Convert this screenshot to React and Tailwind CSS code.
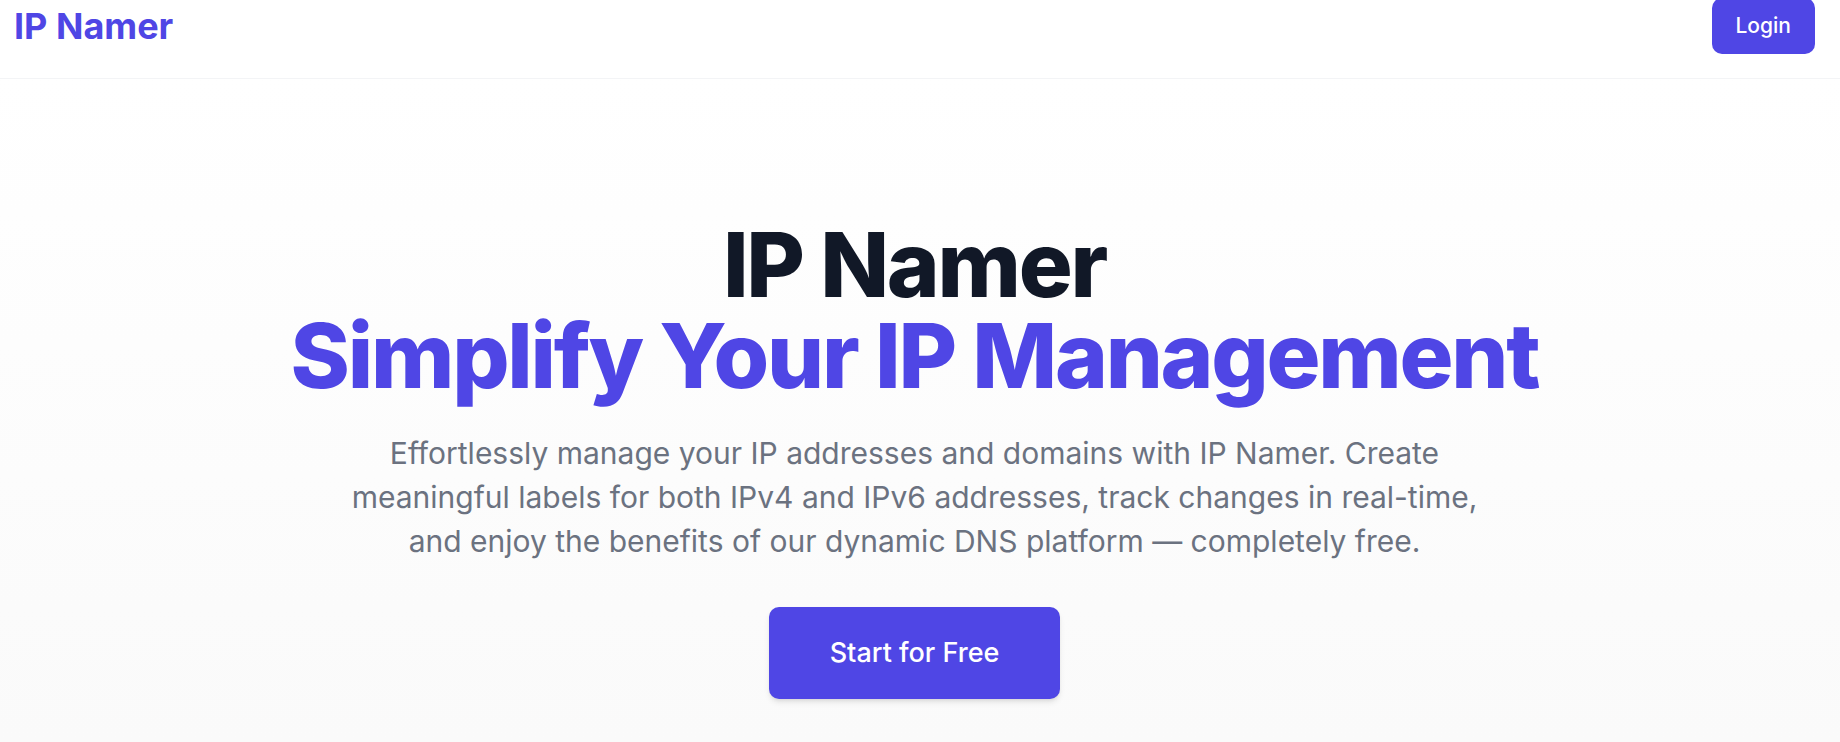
export default function App() {
  return (
    <div className="min-h-screen bg-white font-['Inter',sans-serif]">
      {/* Header */}
      <header className="border-b border-gray-100 shadow-[0_1px_2px_rgba(0,0,0,0.03)]">
        <div className="-mt-[2px] flex items-center justify-between pb-[24px] pl-[14px] pr-[25px]">
          <a href="#" className="text-[36px] font-bold leading-[56px] text-[#4f46e5]">
            IP Namer
          </a>
          <button className="h-[56px] rounded-[10px] bg-[#4f46e5] px-[24px] text-[21px] font-medium text-white">
            Login
          </button>
        </div>
      </header>

      {/* Hero */}
      <main className="bg-gradient-to-b from-white to-[#fafafa] pb-[44px] pr-[11px] pt-[140px]">
        <div className="flex flex-col items-center text-center">
          <h1 className="text-[90px] font-extrabold leading-[91px] tracking-[-0.025em]">
            <span className="block text-[#111827]">IP Namer</span>
            <span className="block text-[#4f46e5]">Simplify Your IP Management</span>
          </h1>
          <p className="mt-[30px] max-w-[1140px] text-[30px] leading-[44px] text-[#6b7280]">
            Effortlessly manage your IP addresses and domains with IP Namer. Create meaningful labels for both IPv4 and IPv6 addresses, track changes in real-time, and enjoy the benefits of our dynamic DNS platform — completely free.
          </p>
          <button className="mt-[44px] h-[92px] rounded-[10px] bg-[#4f46e5] px-[61px] text-[27px] font-medium text-white shadow-md">
            Start for Free
          </button>
        </div>
      </main>
    </div>
  );
}
